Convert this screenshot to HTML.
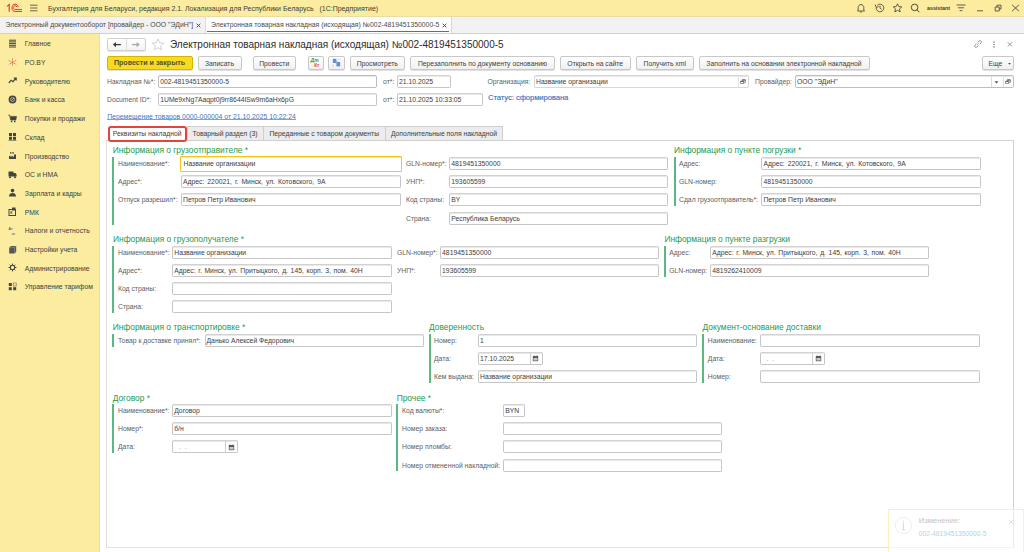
<!DOCTYPE html>
<html><head><meta charset="utf-8">
<style>
*{box-sizing:border-box;margin:0;padding:0}
html,body{width:1024px;height:552px;overflow:hidden;background:#fff;font-family:"Liberation Sans",sans-serif;position:relative}
.a{position:absolute;white-space:nowrap}
#titlebar{left:0;top:0;width:1024px;height:16px;background:#fbeca0}
#tabbar{left:0;top:16px;width:1024px;height:18px;background:#f2f2f2;border-bottom:1px solid #d0d0d0}
#side{left:0;top:34px;width:100px;height:518px;background:#fbeca0;border-right:1px solid #efdf95}
.si{left:0;width:100px;height:18px}
.si .tx{position:absolute;left:24.8px;top:0;line-height:18px;font-size:6.8px;color:#3d3d3d}
.si svg{position:absolute;left:8px;top:4px}
.lbl{font-size:6.8px;color:#606060;line-height:13px}
.inp{position:absolute;height:13px;border:1px solid #c6c6c6;border-top-color:#d2d2d2;border-radius:2px;background:#fff;box-shadow:inset 0 1px 0 #e8e8e8}
.inp span{position:absolute;left:1px;top:0;line-height:12px;font-size:6.8px;color:#3c3c3c;white-space:nowrap}
.btn{position:absolute;height:14px;border:1px solid #c8c8c8;border-radius:2px;background:linear-gradient(#ffffff,#f0f0f0);box-shadow:0 1px 0 #e2e2e2;font-size:6.8px;color:#404040;text-align:center;line-height:13.5px;white-space:nowrap}
.hdr{font-size:8.4px;color:#239b52;line-height:12px}
.gbar{position:absolute;width:2px;background:#5cb882}
.tab{position:absolute;top:125.5px;height:15.5px;border:1px solid #cfcfcf;background:#ececec;font-size:6.8px;color:#404040;line-height:14.5px;text-align:center;white-space:nowrap}
.seg{position:absolute;top:0;height:11px;border-left:1px solid #dcdcdc}
</style></head><body>
<div id="titlebar" class="a"></div>
<div id="tabbar" class="a"></div>
<div id="side" class="a"></div>

<svg class="a" style="left:4px;top:2px" width="24" height="12" viewBox="0 0 24 12">
<path d="M3.1 4.3L5.2 2.4V9.7" stroke="#e4302c" stroke-width="1.1" fill="none"/>
<path d="M14.2 5.2C13.8 3.1 12.7 2.2 11.1 2.2C9.1 2.2 8 3.8 8 5.9C8 8.1 9.2 9.4 11.1 9.4H18" stroke="#e4302c" stroke-width="1" fill="none"/>
<path d="M12.8 5C12.5 4.1 11.9 3.7 11.1 3.7C10.1 3.7 9.6 4.6 9.6 5.8C9.6 6.9 10.2 7.5 11.1 7.5H18" stroke="#e4302c" stroke-width="0.9" fill="none"/>
</svg>
<svg class="a" style="left:30px;top:4px" width="8" height="8" viewBox="0 0 8 8"><path d="M0 1.2H7.5M0 4H7.5M0 6.8H7.5" stroke="#5a5a4a" stroke-width="0.9"/></svg>
<div class="a" style="left:48px;top:2.6px;line-height:12px;font-size:7px;color:#3c3c34">Бухгалтерия для Беларуси, редакция 2.1. Локализация для Республики Беларусь&nbsp;&nbsp;&nbsp;(1С:Предприятие)</div>

<svg class="a" style="left:856px;top:3px" width="10" height="10" viewBox="0 0 10 10"><path d="M2.2 7.2 V4.5 C2.2 2.8 3.4 1.6 5 1.6 C6.6 1.6 7.8 2.8 7.8 4.5 V7.2 L8.6 8 H1.4 Z M4 8.6 C4.2 9.2 5.8 9.2 6 8.6" stroke="#3c3c34" stroke-width="0.8" fill="none"/></svg>
<svg class="a" style="left:874px;top:3px" width="11" height="10" viewBox="0 0 11 10"><path d="M2.2 5 A3.8 3.8 0 1 0 3.3 2.3 M1.2 1.6 L2.2 4.6 L4.8 3.4 M6 2.8 V5.2 L7.6 6.4" stroke="#3c3c34" stroke-width="0.8" fill="none"/></svg>
<svg class="a" style="left:892px;top:3px" width="11" height="10" viewBox="0 0 11 10"><path d="M5.5 0.8 L6.8 3.6 L9.8 3.9 L7.5 5.9 L8.2 8.9 L5.5 7.3 L2.8 8.9 L3.5 5.9 L1.2 3.9 L4.2 3.6 Z" stroke="#3c3c34" stroke-width="0.8" fill="none"/></svg>
<svg class="a" style="left:910px;top:3px" width="11" height="10" viewBox="0 0 11 10"><circle cx="4.6" cy="4.4" r="3.3" stroke="#3c3c34" stroke-width="0.9" fill="none"/><path d="M7 6.8 L9.4 9.2" stroke="#3c3c34" stroke-width="1"/></svg>
<div class="a" style="left:927px;top:2px;line-height:12px;font-size:5.3px;font-weight:bold;color:#3c3c34">assistant</div>
<svg class="a" style="left:956px;top:4px" width="10" height="8" viewBox="0 0 10 8"><path d="M0.5 1H9.5M2 3.8H8M3.6 6.6H6.4" stroke="#3c3c34" stroke-width="0.8"/></svg>
<svg class="a" style="left:976px;top:5px" width="8" height="7" viewBox="0 0 8 7"><path d="M1 5.8H7" stroke="#3c3c34" stroke-width="0.8"/></svg>
<svg class="a" style="left:994px;top:4px" width="8" height="8" viewBox="0 0 8 8"><path d="M1.2 3H5.2V7H1.2Z M3 3V1.2H7V5H5.2" stroke="#3c3c34" stroke-width="0.8" fill="none"/></svg>
<svg class="a" style="left:1011px;top:4px" width="9" height="8" viewBox="0 0 9 8"><path d="M1 0.8L8 7.2M8 0.8L1 7.2" stroke="#3c3c34" stroke-width="0.8"/></svg>

<div class="a" style="left:5.5px;top:18px;line-height:13px;font-size:6.88px;color:#4a4a4a">Электронный документооборот [провайдер - ООО "ЭДиН"]</div>
<svg class="a" style="left:195.8px;top:22.5px" width="5" height="5" viewBox="0 0 5 5"><path d="M0.7 0.7L4.3 4.3M4.3 0.7L0.7 4.3" stroke="#444" stroke-width="0.95"/></svg>
<div class="a" style="left:205px;top:16px;width:247px;height:17px;background:#fff;border-left:1px solid #dcdcdc;border-right:1px solid #d6d6d6"></div>
<div class="a" style="left:207px;top:30.6px;width:242px;height:1.5px;background:#16a047"></div>
<div class="a" style="left:0;top:16px;width:1024px;height:1px;background:#e9dca4"></div>
<div class="a" style="left:211px;top:18px;line-height:13px;font-size:6.85px;color:#4a4a4a">Электронная товарная накладная (исходящая) №002-4819451350000-5</div>
<svg class="a" style="left:442px;top:22.5px" width="5" height="5" viewBox="0 0 5 5"><path d="M0.7 0.7L4.3 4.3M4.3 0.7L0.7 4.3" stroke="#444" stroke-width="0.95"/></svg>
<div class="a si" style="top:35.4px"><svg width="9" height="9" viewBox="0 0 9 9" style="left:8px;top:3.7px"><path d="M1 1.2H8M1 2.9H8M1 4.6H8M1 6.3H8M1 8H8" stroke="#444" stroke-width="1"/></svg><div class="tx">Главное</div></div>
<div class="a si" style="top:54.1px"><svg width="9" height="9" viewBox="0 0 9 9" style="left:8px;top:3.7px"><path d="M4.5 0.5V8.5M0.8 2.5L8.2 6.5M8.2 2.5L0.8 6.5" stroke="#e0524a" stroke-width="0.9" stroke-dasharray="1.2 0.8"/></svg><div class="tx">РО.BY</div></div>
<div class="a si" style="top:72.8px"><svg width="9" height="9" viewBox="0 0 9 9" style="left:8px;top:3.7px"><path d="M0.8 7L3.2 4.2L5 5.6L7.6 2.6M5.8 2.2H8.2V4.6" stroke="#444" stroke-width="1.2" fill="none"/></svg><div class="tx">Руководителю</div></div>
<div class="a si" style="top:91.4px"><svg width="9" height="9" viewBox="0 0 9 9" style="left:8px;top:3.7px"><circle cx="4.5" cy="4.5" r="3.9" fill="#444"/><circle cx="4.5" cy="4.5" r="2" fill="none" stroke="#fbeca0" stroke-width="0.6"/><path d="M3.5 5.5L6 3" stroke="#fbeca0" stroke-width="0.6"/></svg><div class="tx">Банк и касса</div></div>
<div class="a si" style="top:110.1px"><svg width="9" height="9" viewBox="0 0 9 9" style="left:8px;top:3.7px"><path d="M0.3 1H1.6L2.6 6H7.8L8.6 2.4H2" fill="#444" stroke="#444" stroke-width="0.6"/><rect x="2.8" y="6.6" width="1.5" height="1.6" fill="#444"/><rect x="6" y="6.6" width="1.5" height="1.6" fill="#444"/></svg><div class="tx">Покупки и продажи</div></div>
<div class="a si" style="top:128.8px"><svg width="9" height="9" viewBox="0 0 9 9" style="left:8px;top:3.7px"><rect x="1" y="1" width="3" height="3" fill="#444"/><rect x="5" y="1" width="3" height="3" fill="#444"/><rect x="1" y="4.8" width="3" height="3" fill="#444"/><rect x="5" y="4.8" width="3" height="3" fill="#444"/><path d="M0.5 8.6H8.5" stroke="#444" stroke-width="0.6"/></svg><div class="tx">Склад</div></div>
<div class="a si" style="top:147.5px"><svg width="9" height="9" viewBox="0 0 9 9" style="left:8px;top:3.7px"><path d="M1 8V4.5L3.5 6V4.5L6 6V3.5L8 3.5V8Z" fill="#444"/><rect x="2.2" y="1" width="1.2" height="1.8" fill="#444"/><rect x="4.5" y="1" width="1.2" height="1.8" fill="#444"/></svg><div class="tx">Производство</div></div>
<div class="a si" style="top:166.2px"><svg width="9" height="9" viewBox="0 0 9 9" style="left:8px;top:3.7px"><path d="M0.5 1.5H5.5V6.5H0.5Z M5.5 3H7.5L8.6 4.6V6.5H5.5Z" fill="#444"/><circle cx="2" cy="7.2" r="1" fill="#444"/><circle cx="7" cy="7.2" r="1" fill="#444"/></svg><div class="tx">ОС и НМА</div></div>
<div class="a si" style="top:184.8px"><svg width="9" height="9" viewBox="0 0 9 9" style="left:8px;top:3.7px"><circle cx="4.5" cy="2.6" r="1.8" fill="#444"/><path d="M1 8.5C1 6 2.5 5 4.5 5C6.5 5 8 6 8 8.5Z" fill="#444"/></svg><div class="tx">Зарплата и кадры</div></div>
<div class="a si" style="top:203.5px"><svg width="9" height="9" viewBox="0 0 9 9" style="left:8px;top:3.7px"><rect x="1" y="2.5" width="6.5" height="6" fill="none" stroke="#444" stroke-width="1"/><rect x="4" y="0.5" width="3.5" height="3" fill="#444"/><rect x="2.3" y="4.2" width="2" height="2.5" fill="#777"/></svg><div class="tx">РМК</div></div>
<div class="a si" style="top:222.2px"><svg width="9" height="9" viewBox="0 0 9 9" style="left:8px;top:3.7px"><text x="0.5" y="4" font-size="3.8" fill="#444" font-family="Liberation Sans">Ат</text><text x="3.8" y="8.6" font-size="3.4" fill="#444" font-family="Liberation Sans">ку</text></svg><div class="tx">Налоги и отчетность</div></div>
<div class="a si" style="top:240.9px"><svg width="9" height="9" viewBox="0 0 9 9" style="left:8px;top:3.7px"><path d="M1.2 2.6L3 1H8.2V6.8L6.6 8.6H1.2Z" fill="#555"/><path d="M6.6 2.6V8.6M1.2 2.6H6.6L8.2 1" stroke="#aaa" stroke-width="0.5" fill="none"/></svg><div class="tx">Настройки учета</div></div>
<div class="a si" style="top:259.6px"><svg width="9" height="9" viewBox="0 0 9 9" style="left:8px;top:3.7px"><circle cx="4.5" cy="4.5" r="2.2" fill="none" stroke="#444" stroke-width="1.1"/><path d="M4.5 0.6V2M4.5 7V8.4M0.6 4.5H2M7 4.5H8.4M1.7 1.7L2.7 2.7M6.3 6.3L7.3 7.3M7.3 1.7L6.3 2.7M2.7 6.3L1.7 7.3" stroke="#444" stroke-width="1"/></svg><div class="tx">Администрирование</div></div>
<div class="a si" style="top:278.2px"><svg width="9" height="9" viewBox="0 0 9 9" style="left:8px;top:3.7px"><rect x="0.8" y="1" width="3" height="3" fill="#444"/><rect x="5.2" y="1" width="3" height="3" fill="none" stroke="#666" stroke-width="0.6"/><rect x="0.8" y="5.2" width="3" height="3" fill="#444"/><rect x="5.2" y="5.2" width="3" height="3" fill="#444"/></svg><div class="tx">Управление тарифом</div></div>

<!-- nav -->
<div class="a" style="left:106.6px;top:38px;width:39px;height:13px;border:1px solid #d0d0d0;border-radius:2px;background:linear-gradient(#fff,#f3f3f3);box-shadow:0 1px 0 #e6e6e6"></div>
<div class="a" style="left:126px;top:39px;width:1px;height:11px;background:#dcdcdc"></div>
<svg class="a" style="left:112px;top:40px" width="10" height="9" viewBox="0 0 10 9"><path d="M0.8 4.6L4 2V7.2Z" fill="#3a3a3a"/><path d="M3.5 4.6H8.8" stroke="#3a3a3a" stroke-width="1.3"/></svg>
<svg class="a" style="left:131px;top:40px" width="10" height="9" viewBox="0 0 10 9"><path d="M8.8 4.6L5.6 2V7.2Z" fill="#a8a8a8"/><path d="M0.9 4.6H6" stroke="#a8a8a8" stroke-width="1.3"/></svg>
<svg class="a" style="left:151px;top:38px" width="14" height="13" viewBox="0 0 14 13"><path d="M7 0.8L8.7 4.8L12.8 5.1L9.6 7.8L10.6 11.9L7 9.7L3.4 11.9L4.4 7.8L1.2 5.1L5.3 4.8Z" stroke="#c8c8c8" stroke-width="0.8" fill="none"/></svg>
<div class="a" style="left:170px;top:38px;line-height:13px;font-size:10px;color:#2b2b2b">Электронная товарная накладная (исходящая) №002-4819451350000-5</div>
<svg class="a" style="left:973px;top:39px" width="10" height="10" viewBox="0 0 10 10"><path d="M4.2 5.8L5.8 4.2 M3.4 4.6L2 6A1.4 1.4 0 0 0 4 8L5.4 6.6 M4.6 3.4L6 2A1.4 1.4 0 0 1 8 4L6.6 5.4" stroke="#888" stroke-width="0.8" fill="none"/></svg>
<svg class="a" style="left:992px;top:41px" width="4" height="7" viewBox="0 0 4 7"><path d="M2 0.5V1.7M2 2.9V4.1M2 5.3V6.5" stroke="#555" stroke-width="1.1"/></svg>
<svg class="a" style="left:1007px;top:42px" width="6" height="5" viewBox="0 0 6 5"><path d="M0.8 0.3L5 4.5M5 0.3L0.8 4.5" stroke="#777" stroke-width="0.8"/></svg>
<!-- toolbar -->
<div class="a btn" style="left:107px;top:56px;width:86px;background:#f8db1e;border-color:#d6b406;color:#55502e;font-weight:bold;font-size:7.1px;padding-right:1px">Провести и закрыть</div>
<div class="a btn" style="left:197.5px;top:56px;width:44px">Записать</div>
<div class="a btn" style="left:252.5px;top:56px;width:43.5px">Провести</div>
<div class="a btn" style="left:307.5px;top:56px;width:16px"></div>
<svg class="a" style="left:310px;top:57px" width="11" height="11" viewBox="0 0 11 11"><text x="0.6" y="5" font-size="5" fill="#2ea04a" font-family="Liberation Sans" font-weight="bold" font-style="italic">Дт</text><text x="4.2" y="9.8" font-size="4.6" fill="#e0402a" font-family="Liberation Sans" font-weight="bold">Кт</text></svg>
<div class="a btn" style="left:328px;top:56px;width:17px"></div>
<svg class="a" style="left:331px;top:58px" width="11" height="10" viewBox="0 0 11 10"><path d="M1.8 0.8H5.4V5H1.8Z" fill="#5b8fd6"/><path d="M5.4 4H9.2V8.4H5.4Z" fill="#5b8fd6"/><path d="M4.6 3.2H6.6V5.6H4.6Z" fill="#86aee6"/><path d="M6.4 1.2H8.6M1.8 6.4V8.4H3" stroke="#a9c6ee" stroke-width="0.7" fill="none"/></svg>
<div class="a btn" style="left:349.5px;top:56px;width:55.5px">Просмотреть</div>
<div class="a btn" style="left:410px;top:56px;width:145px">Перезаполнить по документу основанию</div>
<div class="a btn" style="left:560px;top:56px;width:70.5px">Открыть на сайте</div>
<div class="a btn" style="left:636px;top:56px;width:57.5px">Получить xml</div>
<div class="a btn" style="left:698.5px;top:56px;width:171px">Заполнить на основании электронной накладной</div>
<div class="a btn" style="left:981.5px;top:56px;width:32.5px;text-align:left;padding-left:6px">Еще<svg style="position:absolute;left:25.5px;top:5.5px" width="3" height="2" viewBox="0 0 3 2"><path d="M0 0H3L1.5 1.8Z" fill="#555"/></svg></div>

<!-- header rows -->
<div class="a lbl" style="left:107px;top:75.3px">Накладная №*:</div>
<div class="inp" style="left:158.2px;top:75.3px;width:219.3px;border-color:#bdbdbd"><span>002-4819451350000-5</span></div>
<div class="a lbl" style="left:383px;top:75.3px">от*:</div>
<div class="inp" style="left:397px;top:75.3px;width:53.5px"><span>21.10.2025</span></div>
<div class="a lbl" style="left:487.5px;top:75.3px">Организация:</div>
<div class="inp" style="left:534px;top:75.3px;width:215px;border-color:#d8d8d8"><span>Название организации</span><div class="seg" style="left:202.8px;border-left-color:#e2e2e2"></div><svg style="position:absolute;left:205.3px;top:3px" width="6" height="5" viewBox="0 0 6 5"><path d="M0.6 2.2H3.6V4.6H0.6Z M2.2 2.2V0.9H5.4V3.4H3.6" stroke="#555" stroke-width="0.65" fill="none"/><path d="M2.2 0.6H5.4V1.5H2.2Z M0.6 1.9H3.6V2.8H0.6Z" fill="#555"/></svg></div>
<div class="a lbl" style="left:755px;top:75.3px">Провайдер:</div>
<div class="inp" style="left:795px;top:75.3px;width:219px;border-color:#bdbdbd"><span>ООО "ЭДиН"</span><div class="seg" style="left:195px"></div><svg style="position:absolute;left:197.5px;top:4.5px" width="5" height="3" viewBox="0 0 5 3"><path d="M0.5 0.3H4.5L2.5 2.6Z" fill="#555"/></svg><div class="seg" style="left:206.5px"></div><svg style="position:absolute;left:209px;top:3px" width="6" height="5" viewBox="0 0 6 5"><path d="M0.6 2.2H3.6V4.6H0.6Z M2.2 2.2V0.9H5.4V3.4H3.6" stroke="#555" stroke-width="0.65" fill="none"/><path d="M2.2 0.6H5.4V1.5H2.2Z M0.6 1.9H3.6V2.8H0.6Z" fill="#555"/></svg></div>
<div class="a lbl" style="left:107px;top:93.3px">Document ID*:</div>
<div class="inp" style="left:158.2px;top:93.3px;width:218.5px"><span>1UMe9xNg7Aaqpt0j9rr8644ISw9m6aHx6pG</span></div>
<div class="a lbl" style="left:383px;top:93.3px">от*:</div>
<div class="inp" style="left:397px;top:93.3px;width:85.5px"><span>21.10.2025 10:33:05</span></div>
<div class="a" style="left:488px;top:90.8px;line-height:13px;font-size:7.5px;color:#3f7cc2;text-shadow:0.3px 0 0 rgba(63,124,194,0.6)">Статус: сформирована</div>
<div class="a" style="left:107.2px;top:109.6px;line-height:13px;font-size:6.85px;color:#4577bb">Перемещение товаров 0000-000004 от 21.10.2025 10:22:24</div><div class="a" style="left:107px;top:119.2px;width:188.5px;height:1px;background:#7fa2d4"></div>
<!-- tabs -->
<div class="a" style="left:106px;top:140px;width:908px;height:408px;border:1px solid #d2d2d2;border-left-color:#e0e0e0;border-bottom-color:#e2e2e2"></div>
<div class="tab" style="left:186.5px;width:77px">Товарный раздел (3)</div>
<div class="tab" style="left:263px;width:122.5px">Переданные с товаром документы</div>
<div class="tab" style="left:385px;width:118px">Дополнительные поля накладной</div>
<div class="tab" style="left:107.5px;width:79.5px;background:#fff;border:2px solid #e2453b;border-radius:3px;top:125.8px;height:16px;line-height:12px">Реквизиты накладной</div>
<!-- SECTIONS -->
<div class="a hdr" style="left:112.7px;top:144.0px">Информация о грузоотправителе *</div>
<div class="gbar" style="left:112px;top:156.6px;height:68.1px"></div>
<div class="a lbl" style="left:118px;top:156.6px">Наименование*:</div>
<div class="inp" style="left:179.7px;top:155.5px;width:222px;height:16px;border:1.5px solid #f5c518;border-radius:1px"><span style="left:2.8px;line-height:13px">Название организации</span></div>
<div class="a lbl" style="left:118px;top:174.9px">Адрес*:</div>
<div class="inp" style="left:181px;top:174.9px;width:220.2px"><span><i style="font-style:normal;word-spacing:1.1px">Адрес: 220021, г. Минск, ул. Котовского, 9А</i></span></div>
<div class="a lbl" style="left:118px;top:193.3px">Отпуск разрешил*:</div>
<div class="inp" style="left:181px;top:193.3px;width:220.2px"><span>Петров Петр Иванович</span></div>
<div class="a lbl" style="left:406px;top:156.6px">GLN-номер*:</div>
<div class="inp" style="left:449.3px;top:156.6px;width:218.9px"><span>4819451350000</span></div>
<div class="a lbl" style="left:406px;top:174.9px">УНП*:</div>
<div class="inp" style="left:449.3px;top:174.9px;width:218.9px"><span>193605599</span></div>
<div class="a lbl" style="left:406px;top:193.3px">Код страны:</div>
<div class="inp" style="left:449.3px;top:193.3px;width:218.9px"><span>BY</span></div>
<div class="a lbl" style="left:406px;top:211.7px">Страна:</div>
<div class="inp" style="left:449.3px;top:211.7px;width:218.9px"><span>Республика Беларусь</span></div>
<div class="a hdr" style="left:674px;top:144.0px">Информация о пункте погрузки *</div>
<div class="gbar" style="left:673.5px;top:156.6px;height:49.7px"></div>
<div class="a lbl" style="left:679px;top:156.6px">Адрес:</div>
<div class="inp" style="left:761.4px;top:156.6px;width:219.8px"><span><i style="font-style:normal;word-spacing:1.1px">Адрес: 220021, г. Минск, ул. Котовского, 9А</i></span></div>
<div class="a lbl" style="left:679px;top:174.9px">GLN-номер:</div>
<div class="inp" style="left:761.4px;top:174.9px;width:219.8px"><span>4819451350000</span></div>
<div class="a lbl" style="left:679px;top:193.3px">Сдал грузоотправитель*:</div>
<div class="inp" style="left:761.4px;top:193.3px;width:219.8px"><span>Петров Петр Иванович</span></div>
<div class="a hdr" style="left:113px;top:233.0px">Информация о грузополучателе *</div>
<div class="gbar" style="left:112px;top:245.5px;height:67.3px"></div>
<div class="a lbl" style="left:118px;top:245.5px">Наименование*:</div>
<div class="inp" style="left:172.3px;top:245.5px;width:219.7px"><span>Название организации</span></div>
<div class="a lbl" style="left:118px;top:263.6px">Адрес*:</div>
<div class="inp" style="left:172.3px;top:263.6px;width:219.7px"><span><i style="font-style:normal;word-spacing:0.75px">Адрес: г. Минск, ул. Притыцкого, д. 145, корп. 3, пом. 40Н</i></span></div>
<div class="a lbl" style="left:118px;top:281.7px">Код страны:</div>
<div class="inp" style="left:172.3px;top:281.7px;width:219.7px"></div>
<div class="a lbl" style="left:118px;top:299.8px">Страна:</div>
<div class="inp" style="left:172.3px;top:299.8px;width:219.7px"></div>
<div class="a lbl" style="left:397px;top:245.5px">GLN-номер*:</div>
<div class="inp" style="left:440.1px;top:245.5px;width:219.0px"><span>4819451350000</span></div>
<div class="a lbl" style="left:397px;top:263.6px">УНП*:</div>
<div class="inp" style="left:440.1px;top:263.6px;width:219.0px"><span>193605599</span></div>
<div class="a hdr" style="left:664.4px;top:233.0px">Информация о пункте разгрузки</div>
<div class="gbar" style="left:664px;top:245.5px;height:31.1px"></div>
<div class="a lbl" style="left:669.3px;top:245.5px">Адрес:</div>
<div class="inp" style="left:710.3px;top:245.5px;width:218.9px"><span><i style="font-style:normal;word-spacing:0.75px">Адрес: г. Минск, ул. Притыцкого, д. 145, корп. 3, пом. 40Н</i></span></div>
<div class="a lbl" style="left:669.3px;top:263.6px">GLN-номер:</div>
<div class="inp" style="left:710.3px;top:263.6px;width:218.9px"><span>4819262410009</span></div>
<div class="a hdr" style="left:112.7px;top:321.0px">Информация о транспортировке *</div>
<div class="gbar" style="left:112px;top:334.2px;height:13.0px"></div>
<div class="a lbl" style="left:118px;top:334.2px">Товар к доставке принял*:</div>
<div class="inp" style="left:204.5px;top:334.2px;width:219.5px"><span>Данько Алексей Федорович</span></div>
<div class="a hdr" style="left:429px;top:321.0px">Доверенность</div>
<div class="gbar" style="left:428.7px;top:334.2px;height:49.2px"></div>
<div class="a lbl" style="left:434px;top:334.2px">Номер:</div>
<div class="inp" style="left:478.1px;top:334.2px;width:219.2px"><span>1</span></div>
<div class="a lbl" style="left:434px;top:352.3px">Дата:</div>
<div class="inp" style="left:478.1px;top:352.3px;width:64.9px"><span>17.10.2025</span><div class="seg" style="left:50.9px;border-left-color:#cfcfcf"></div><svg style="position:absolute;left:53.4px;top:2.2px" width="7" height="7" viewBox="0 0 7 7"><rect x="0.8" y="1" width="5.4" height="5.2" fill="#5a5a5a"/><rect x="1.5" y="3" width="4" height="2.5" fill="#c9c9c9"/><path d="M2 0.3V1.3M5 0.3V1.3" stroke="#5a5a5a" stroke-width="0.6"/></svg></div>
<div class="a lbl" style="left:434px;top:370.4px">Кем выдана:</div>
<div class="inp" style="left:478.1px;top:370.4px;width:219.2px"><span>Название организации</span></div>
<div class="a hdr" style="left:702.6px;top:321.0px">Документ-основание доставки</div>
<div class="gbar" style="left:702.3px;top:334.2px;height:49.2px"></div>
<div class="a lbl" style="left:707.8px;top:334.2px">Наименование:</div>
<div class="inp" style="left:759.5px;top:334.2px;width:220.2px"></div>
<div class="a lbl" style="left:707.8px;top:352.3px">Дата:</div>
<div class="inp" style="left:759.5px;top:352.3px;width:65.9px"><span><span style="color:#999;position:static;padding-left:5px">.&nbsp;&nbsp;.</span></span><div class="seg" style="left:51.9px;border-left-color:#cfcfcf"></div><svg style="position:absolute;left:54.4px;top:2.2px" width="7" height="7" viewBox="0 0 7 7"><rect x="0.8" y="1" width="5.4" height="5.2" fill="#5a5a5a"/><rect x="1.5" y="3" width="4" height="2.5" fill="#c9c9c9"/><path d="M2 0.3V1.3M5 0.3V1.3" stroke="#5a5a5a" stroke-width="0.6"/></svg></div>
<div class="a lbl" style="left:707.8px;top:370.4px">Номер:</div>
<div class="inp" style="left:759.5px;top:370.4px;width:220.2px"></div>
<div class="a hdr" style="left:112.7px;top:391.7px">Договор *</div>
<div class="gbar" style="left:112px;top:404.3px;height:49.1px"></div>
<div class="a lbl" style="left:118px;top:404.3px">Наименование*:</div>
<div class="inp" style="left:172.2px;top:404.3px;width:219.7px"><span>Договор</span></div>
<div class="a lbl" style="left:118px;top:422.4px">Номер*:</div>
<div class="inp" style="left:172.2px;top:422.4px;width:219.7px"><span>б/н</span></div>
<div class="a lbl" style="left:118px;top:440.4px">Дата:</div>
<div class="inp" style="left:172.2px;top:440.4px;width:66.0px"><span><span style="color:#999;position:static;padding-left:5px">.&nbsp;&nbsp;.</span></span><div class="seg" style="left:52.0px;border-left-color:#cfcfcf"></div><svg style="position:absolute;left:54.5px;top:2.2px" width="7" height="7" viewBox="0 0 7 7"><rect x="0.8" y="1" width="5.4" height="5.2" fill="#5a5a5a"/><rect x="1.5" y="3" width="4" height="2.5" fill="#c9c9c9"/><path d="M2 0.3V1.3M5 0.3V1.3" stroke="#5a5a5a" stroke-width="0.6"/></svg></div>
<div class="a hdr" style="left:396.7px;top:391.7px">Прочее *</div>
<div class="gbar" style="left:396.4px;top:404.3px;height:67.2px"></div>
<div class="a lbl" style="left:402.1px;top:404.3px">Код валюты*:</div>
<div class="inp" style="left:503.2px;top:404.3px;width:21.9px"><span>BYN</span></div>
<div class="a lbl" style="left:402.1px;top:422.4px">Номер заказа:</div>
<div class="inp" style="left:503.2px;top:422.4px;width:219.0px"></div>
<div class="a lbl" style="left:402.1px;top:440.4px">Номер пломбы:</div>
<div class="inp" style="left:503.2px;top:440.4px;width:219.0px"></div>
<div class="a lbl" style="left:402.1px;top:458.5px">Номер отмененной накладной:</div>
<div class="inp" style="left:503.2px;top:458.5px;width:219.0px"></div>
<!-- /SECTIONS -->
<!-- notif -->
<div class="a" style="left:887.5px;top:509px;width:136.5px;height:44px;border:1px solid #fcefc6;border-bottom:none;background:rgba(255,255,255,0.55)"></div>
<svg class="a" style="left:894px;top:516px" width="19" height="19" viewBox="0 0 19 19"><circle cx="9.5" cy="9.5" r="8.2" fill="none" stroke="#e2e6ea" stroke-width="0.7"/><circle cx="9.5" cy="5.3" r="0.7" fill="#c8dcec"/><path d="M9.5 7.5V13.5M7.8 13.6H11.2M8.4 7.6H9.6" stroke="#bcd6ea" stroke-width="0.8"/></svg>
<div class="a" style="left:918.7px;top:515px;line-height:12px;font-size:7.6px;color:#c4c4c4">Изменение:</div>
<div class="a" style="left:918.7px;top:527.5px;line-height:12px;font-size:6.7px;color:#b4d2ea">002-4819451350000-5</div>
<svg class="a" style="left:1008px;top:518.5px" width="6" height="6" viewBox="0 0 6 6"><path d="M0.8 0.8L5.2 5.2M5.2 0.8L0.8 5.2" stroke="#d0d0d0" stroke-width="0.7"/></svg>
</body></html>
